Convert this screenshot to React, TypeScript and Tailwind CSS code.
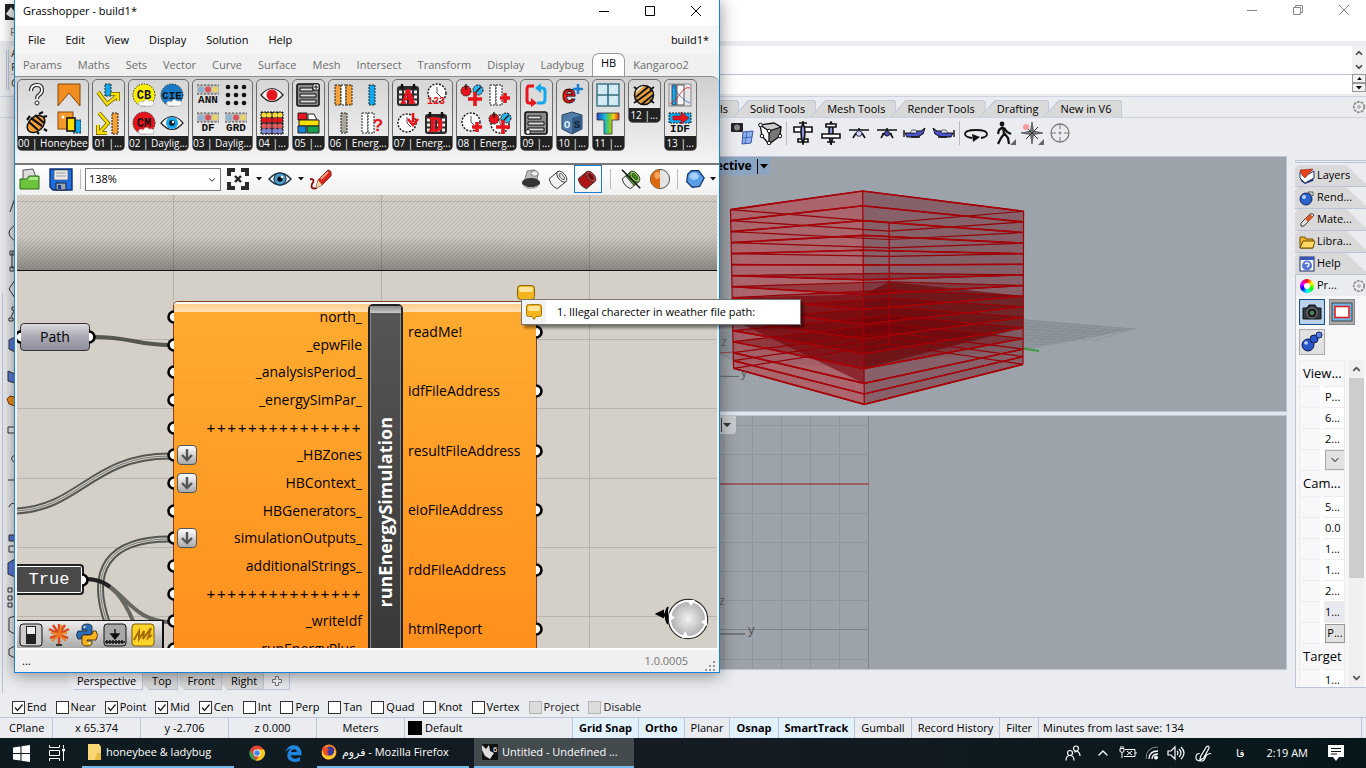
import type { ReactNode } from "react";
import { ChevronDown, ChevronUp } from "lucide-react";

const RED = "#e8141c";
const YEL = "#f7e000";
const ORG = "#f5a13a";
const BLU = "#12a8ee";

const dots3 = (y: number) => (
  <>
    <rect x="1" y={y} width="22" height="9" fill="#bbb" />
    <path d={`M1 ${y}h22M1 ${y + 9}h22`} stroke="#444" strokeDasharray="2 1.5" />
    <circle cx="5" cy={y + 4.5} r="3" fill="#8db4cf" />
    <circle cx="12" cy={y + 4.5} r="3" fill="#d8525a" />
    <circle cx="19" cy={y + 4.5} r="3" fill="#e8d36a" />
  </>
);

const tag = (text: string, x: number, y: number, size: number, fill = "#111") => (
  <text x={x} y={y} fontSize={size} fontWeight="bold" textAnchor="middle" fill={fill} fontFamily="Liberation Mono, monospace">
    {text}
  </text>
);

const sun = (fill: string, text: string) => (
  <>
    <circle cx="12" cy="12" r="11" fill={fill} stroke="#333" strokeDasharray="1.5 1.2" />
    {tag(text, 12, 16, text.length > 2 ? 11 : 12)}
    <path d="M9 23q-4-1-2-4 2-2 4 0 3-5 6-1 5-1 5 3 0 2-3 2z" fill="#fff" stroke="#999" strokeWidth=".6" />
  </>
);

const eye = (iris: string, r: number) => (
  <>
    <path d="M1 12q11-13 22 0-11 13-22 0z" fill="#fff" stroke="#222" strokeWidth="1.2" />
    <circle cx="12" cy="12" r={r} fill={iris} />
  </>
);

const plus = (x: number, y: number, s = 5) => (
  <path d={`M${x - s} ${y}h${s * 2}M${x} ${y - s}v${s * 2}`} stroke={RED} strokeWidth="3.6" />
);

const clock = (x: number, y: number, r: number) => (
  <>
    <circle cx={x} cy={y} r={r} fill="#fff" stroke="#111" strokeWidth="1.4" strokeDasharray="2 1.4" />
    <path d={`M${x} ${y - r + 3}V${y}l4 4`} stroke="#555" fill="none" />
  </>
);

const calendar = (text: string) => (
  <>
    <rect x="1" y="3" width="22" height="20" rx="3" fill="#2a2a2a" />
    <path d="M6 1v5M18 1v5" stroke="#111" strokeWidth="2.5" />
    <path d="M3 9h18M3 14h18M3 19h18" stroke="#eee" strokeWidth="3" strokeDasharray="3 2" />
    <text x="12" y="20" fontSize="18" fontWeight="bold" textAnchor="middle" fill={RED} stroke={RED} strokeWidth="1.4" fontFamily="Liberation Serif, serif">{text}</text>
  </>
);

const bee = (
  <>
    <ellipse cx="12" cy="13" rx="10" ry="7" transform="rotate(-42 12 13)" fill={ORG} stroke="#111" strokeWidth="1.5" />
    <path d="M7 7l11 8M5 11l9 8M11 4l9 8M3 9l3-4M20 18l3 2M13 21l2 2M15 3l4-2M19 6l4-1" stroke="#111" strokeWidth="2.2" />
  </>
);

const wall = (fill: string, x = 8, w = 9) => (
  <rect x={x} y="2" width={w} height="20" fill={fill} stroke="#222" strokeDasharray="2 1" />
);

const redBlueDots = (
  <>
    <circle cx="6" cy="8" r="5" fill={RED} stroke="#111" strokeDasharray="2 1" />
    <circle cx="18" cy="7" r="5" fill="#2bb5ea" stroke="#111" strokeDasharray="2 1" />
    <path d="M6 1v6M15 10l6-6" stroke="#111" strokeWidth="1.3" />
    {plus(15, 16, 7)}
  </>
);

const listBox = (
  <>
    <rect x="1" y="1" width="22" height="22" rx="2" fill="#8a8a8a" stroke="#111" strokeWidth="1.6" />
    <path d="M4 5h13v3H4zM4 11h16v3H4zM4 17h16v3H4z" fill="#ddd" stroke="#111" />
  </>
);

const glyphs: Record<string, ReactNode> = {
  help: (
    <>
      <path d="M7 8q0-6 6-6 5 0 5 5 0 3-3 5-2 1-2 4" fill="none" stroke="#222" strokeWidth="4" />
      <path d="M7 8q0-6 6-6 5 0 5 5 0 3-3 5-2 1-2 4" fill="none" stroke="#fff" strokeWidth="1.8" />
      <circle cx="13" cy="20" r="2" fill="#fff" stroke="#222" />
    </>
  ),
  bee,
  update: <path d="M1 1h22v22L12 10 1 23z" fill="#f28c1e" stroke="#7a4a10" />,
  boxes: (
    <>
      <rect x="1" y="1" width="15" height="17" fill="#f49a2c" stroke="#8a4b0c" />
      <rect x="16" y="9" width="8" height="13" fill={BLU} stroke="#222" strokeDasharray="2 1" />
      <rect x="10" y="7" width="8" height="13" fill={YEL} stroke="#111" strokeWidth="1.6" />
      <circle cx="6" cy="6" r="1.5" fill="#fff" />
    </>
  ),
  split: (
    <>
      <rect x="9" y="1" width="6" height="12" fill={BLU} stroke="#222" strokeDasharray="2 1" />
      <path d="M2 9l9 12 10-8M15 11h7v7" fill="none" stroke="#655c00" strokeWidth="4" />
      <path d="M2 9l9 12 10-8M15 11h7v7" fill="none" stroke={YEL} strokeWidth="2.6" />
    </>
  ),
  bounce: (
    <>
      <rect x="16" y="2" width="6" height="21" fill={ORG} stroke="#222" strokeDasharray="2 1" />
      <path d="M3 2l9 10-8 9M2 14v8h9" fill="none" stroke="#655c00" strokeWidth="4" />
      <path d="M3 2l9 10-8 9M2 14v8h9" fill="none" stroke={YEL} strokeWidth="2.6" />
    </>
  ),
  cb: sun("#fff000", "CB"),
  cm: sun(RED, "CM"),
  cie: sun("#1a79c4", "CIE"),
  eyeBlue: (
    <>
      {eye(BLU, 6)}
      <circle cx="12" cy="12" r="3" fill="#123" />
      <circle cx="13" cy="11" r="1.2" fill="#fff" />
    </>
  ),
  ann: <>{dots3(2)}{tag("ANN", 12, 20, 11)}</>,
  df: <>{dots3(2)}{tag("DF", 12, 20, 11)}</>,
  grd: <>{dots3(2)}{tag("GRD", 12, 20, 11)}</>,
  dots: (
    <g fill="#111">
      {[4, 12, 20].map((y) => [4, 12, 20].map((x) => <circle key={`${x}-${y}`} cx={x} cy={y} r="2.3" />))}
    </g>
  ),
  eyeRed: eye(RED, 5.5),
  grid: (
    <>
      <rect x="1" y="1" width="22" height="22" fill="#333" stroke="#111" strokeDasharray="2 1" />
      {[4, 9, 15, 20].map((y, r) =>
        [4, 9, 15, 20].map((x) => (
          <circle key={`${x}-${y}`} cx={x} cy={y} r="2.6" fill={["#f2dc3c", RED, "#e0585c", "#8087d8"][r]} />
        )),
      )}
    </>
  ),
  list: (
    <>
      {listBox}
      <path d="M17 1h6v6h-6z" fill="#fff" stroke="#111" />
      <path d="M20 2v4M18 4h4" stroke="#111" />
    </>
  ),
  bars: (
    <>
      <path d="M2 2h9v7H2z" fill={RED} stroke="#222" />
      <path d="M12 3h6l3 6h-9z" fill="#fff" stroke="#222" />
      <path d="M3 9h20v6H3z" fill={YEL} stroke="#222" />
      <path d="M2 15h8v7H2z" fill="#1583d8" stroke="#222" />
      <path d="M11 15h12v7H11z" fill="#1aa04a" stroke="#222" />
    </>
  ),
  wallPair: <>{wall(ORG, 3, 6)}{wall("#fff", 9, 5)}{wall(ORG, 14, 6)}</>,
  wallBlue: wall(BLU, 9, 6),
  wallGrey: wall("#aaa59a", 9, 6),
  wallAsk: (
    <>
      {wall("#fff", 2, 6)}{wall("#fff", 8, 6)}
      <text x="18" y="20" fontSize="17" fontWeight="bold" textAnchor="middle" fill={RED} fontFamily="Liberation Sans, sans-serif">?</text>
    </>
  ),
  calA: calendar("A"),
  calD: calendar("D"),
  clock123: <>{clock(13, 10, 9)}{tag("123", 12, 21, 10, RED)}</>,
  clockDown: <>{clock(11, 12, 9)}<path d="M17 2v9M12 8l5 6 5-6" stroke={RED} strokeWidth="2.6" fill="none" /></>,
  dotsPlus: redBlueDots,
  wallPlus: <>{wall("#fff", 2, 6)}{wall("#fff", 8, 6)}{plus(17, 15)}</>,
  clockPlus: <>{clock(11, 11, 9)}{plus(17, 16)}</>,
  dotsClock: <>{clock(12, 13, 9)}{redBlueDots}</>,
  swap: (
    <>
      <path d="M10 3H5q-2 0-2 4v10q0 3 2 3h2" fill="none" stroke={RED} strokeWidth="3" />
      <path d="M7 15l6 5-6 4z" fill={RED} />
      <path d="M13 20h5q3 0 3-4V8q0-3-3-3h-1" fill="none" stroke={BLU} strokeWidth="3" />
      <path d="M17 0v10l-6-5z" fill={BLU} />
    </>
  ),
  listDot: <>{listBox}<circle cx="4" cy="21" r="2.4" fill="#fff" stroke="#111" /></>,
  ePlus: (
    <>
      <text x="9" y="20" fontSize="25" fontWeight="bold" textAnchor="middle" fill={RED} stroke="#111" strokeWidth=".8" fontFamily="Liberation Sans, sans-serif">e</text>
      <path d="M13 6h10M18 1v10" stroke="#1b7fd0" strokeWidth="2.6" />
    </>
  ),
  os: (
    <>
      <path d="M2 4l10-3 10 3v14l-10 5-10-5z" fill="#4f7ca8" stroke="#27445f" />
      <path d="M12 7l10-3v14l-10 5z" fill="#355c82" />
      {tag("O", 7, 17, 11, "#dfeefa")}{tag("S", 17, 17, 11, "#0f2234")}
    </>
  ),
  window: (
    <>
      <rect x="1" y="1" width="22" height="22" fill="#cdeaf6" stroke="#3b6d80" strokeWidth="1.4" />
      <path d="M12 1v22M1 12h22" stroke="#3b6d80" strokeWidth="1.6" />
      <path d="M3 9l6-6M14 9l6-6M3 20l6-6M14 20l6-6" stroke="#fff" />
    </>
  ),
  therm: (
    <>
      <defs>
        <linearGradient id="thermal">
          <stop offset="0" stopColor="#2440d0" />
          <stop offset=".35" stopColor="#16b8d8" />
          <stop offset=".55" stopColor="#6cc838" />
          <stop offset=".75" stopColor="#f6d020" />
          <stop offset="1" stopColor="#e83418" />
        </linearGradient>
      </defs>
      <path d="M1 2h22v7h-7v14H8V9H1z" fill="url(#thermal)" stroke="#333" strokeWidth=".8" />
    </>
  ),
  beeRound: (
    <>
      <circle cx="12" cy="12" r="9.500" fill="#e8a03c" stroke="#111" strokeWidth="1.6" />
      <path d="M4 14L16 4M5 18L20 7M10 21L21 12M2 4l4 3M22 4l-4 3M2 20l4-3M22 20l-4-3" stroke="#111" strokeWidth="1.8" fill="none" />
      <path d="M4 8q3-5 8-5L4 10z" fill="#ddd" />
    </>
  ),
  graph: (
    <>
      <rect x="1" y="1" width="22" height="22" fill="#e6e6e6" stroke="#888" />
      <rect x="4" y="2" width="4" height="20" fill={BLU} stroke="#345" />
      <rect x="9" y="2" width="7" height="20" fill="#fafafa" stroke="#555" />
      <path d="M2 21q8-5 10-10 5-8 10-6" stroke={RED} fill="none" strokeWidth=".8" />
      <path d="M5 3q8 14 17 17" stroke="#36c" fill="none" strokeWidth=".8" />
    </>
  ),
  idf: (
    <>
      <rect x="1" y="2" width="22" height="10" fill={BLU} stroke="#222" strokeDasharray="2 1" />
      <path d="M5 5h8V1l8 6-8 6V9H5z" fill={RED} stroke="#700" strokeWidth=".5" />
      {tag("IDF", 12, 21, 11)}
    </>
  ),
};

function Glyph({ name }: { name: string }) {
  return (
    <svg viewBox="0 0 24 24" className="h-6 w-6" aria-hidden="true">
      {glyphs[name]}
    </svg>
  );
}

const ribbonGroups: { label: string; icons: string[]; size: string }[] = [
  { label: "00 | Honeybee", icons: ["help", "update", "bee", "boxes"], size: "w-[69px] grid-cols-2" },
  { label: "01 |...", icons: ["split", "bounce"], size: "w-[31px] grid-cols-1" },
  { label: "02 | Daylig...", icons: ["cb", "cie", "cm", "eyeBlue"], size: "w-[59px] grid-cols-2" },
  { label: "03 | Daylig...", icons: ["ann", "dots", "df", "grd"], size: "w-[59px] grid-cols-2" },
  { label: "04 |...", icons: ["eyeRed", "grid"], size: "w-[31px] grid-cols-1" },
  { label: "05 |...", icons: ["list", "bars"], size: "w-[31px] grid-cols-1" },
  { label: "06 | Energ...", icons: ["wallPair", "wallBlue", "wallGrey", "wallAsk"], size: "w-[59px] grid-cols-2" },
  { label: "07 | Energ...", icons: ["calA", "clock123", "clockDown", "calD"], size: "w-[59px] grid-cols-2" },
  { label: "08 | Energ...", icons: ["dotsPlus", "wallPlus", "clockPlus", "dotsClock"], size: "w-[59px] grid-cols-2" },
  { label: "09 |...", icons: ["swap", "listDot"], size: "w-[31px] grid-cols-1" },
  { label: "10 |...", icons: ["ePlus", "os"], size: "w-[31px] grid-cols-1" },
  { label: "11 |...", icons: ["window", "therm"], size: "w-[31px] grid-cols-1" },
  { label: "12 |...", icons: ["beeRound"], size: "w-[31px] grid-cols-1" },
  { label: "13 |...", icons: ["graph", "idf"], size: "w-[31px] grid-cols-1" },
];

const ghMenus = ["File", "Edit", "View", "Display", "Solution", "Help"];
const ghTabs = ["Params", "Maths", "Sets", "Vector", "Curve", "Surface", "Mesh", "Intersect", "Transform", "Display", "Ladybug", "HB", "Kangaroo2"];

const inputs = [
  "north_", "_epwFile", "_analysisPeriod_", "_energySimPar_", "+++++++++++++++", "_HBZones", "HBContext_",
  "HBGenerators_", "simulationOutputs_", "additionalStrings_", "+++++++++++++++", "_writeIdf", "runEnergyPlus_",
];
const treeInputs = ["_HBZones", "HBContext_", "simulationOutputs_"];
const outputs = ["readMe!", "idfFileAddress", "resultFileAddress", "eioFileAddress", "rddFileAddress", "htmlReport"];

function Ribbon() {
  return (
    <div className="flex h-[87px] items-start gap-[3px] rounded-tr-lg border-t border-[#8c8c8c] bg-linear-to-b from-[#cfcfcf] to-[#f4f4f4] px-[2px] pt-[2px]">
      {ribbonGroups.map((g) => (
        <section key={g.label} className="shrink-0 rounded-[5px] border border-[#6b6b6b] bg-linear-to-b from-[#d6d6d6] to-[#f0f0f0]">
          <div className={`grid justify-items-center gap-y-1 px-px pt-[3px] pb-px ${g.size}`}>
            {g.icons.map((name) => (
              <button key={name} type="button" aria-label={name} className="h-6 w-6">
                <Glyph name={name} />
              </button>
            ))}
          </div>
          <h3 className="flex h-[14px] w-full justify-center rounded-b-[3px] bg-[#222] text-[10px] leading-[14px] whitespace-nowrap text-white">{g.label}</h3>
        </section>
      ))}
    </div>
  );
}

const can = (body: string, lid: string, hole: string) => (
  <svg viewBox="0 0 24 24" className="h-[22px] w-[22px]" aria-hidden="true">
    <g transform="rotate(-40 12 12)" stroke="#333">
      <path d="M4 5h12v14H4q-4-7 0-14z" fill={body} />
      <ellipse cx="16" cy="12" rx="4" ry="7" fill={lid} />
      <ellipse cx="16" cy="12" rx="2" ry="4" fill={hole} strokeWidth=".8" />
    </g>
  </svg>
);

const Caret = () => (
  <svg viewBox="0 0 6 4" className="h-1 w-[6px]" aria-hidden="true"><path d="M0 0h6L3 3.5z" fill="#111" /></svg>
);

function CanvasToolbar() {
  return (
    <div className="flex h-8 items-center border-t-2 border-[#777] bg-linear-to-b from-white to-[#f0f0f0] pr-[3px] pb-[2px] pl-1">
      <button type="button" aria-label="Open" className="mr-2 h-6 w-[22px]">
        <svg viewBox="0 0 22 24"><path d="M4 3l10-1 3 8v6H4z" fill="#ddd" stroke="#555" /><path d="M1 22V12h7l2-3h10v13z" fill="#6cc33c" stroke="#2b6b12" /><path d="M2 13h7l2-3h8v3z" fill="#a9e58a" /></svg>
      </button>
      <button type="button" aria-label="Save" className="mr-[7px] h-6 w-6">
        <svg viewBox="0 0 24 24"><path d="M1 2h22v21H4l-3-3z" fill="#1e6fe0" stroke="#0b2e78" strokeWidth="1.4" /><path d="M5 3h14v10H5z" fill="#e8e8e8" stroke="#345" strokeWidth=".6" /><path d="M7 6h10M7 9h10" stroke="#999" /><path d="M7 16h10v7H7z" fill="#9aa3b0" stroke="#123" /><path d="M9 18h3v4H9z" fill="#123a8c" /></svg>
      </button>
      <span className="h-5 w-px bg-[#bbb]" />
      <label className="relative ml-1 block h-[23px]">
        <select aria-label="Zoom" className="block h-[23px] w-[136px] appearance-none border border-[#7a7a7a] bg-white px-[3px] text-[11px]" defaultValue="138%">
          <option>138%</option>
        </select>
        <ChevronDown className="pointer-events-none absolute top-[7px] right-1 h-[10px] w-[10px]" strokeWidth={2} />
      </label>
      <button type="button" aria-label="Zoom extents" className="ml-[5px] flex items-center gap-[6px]">
        <svg viewBox="0 0 24 24" className="h-6 w-6"><path d="M3 9V3h6M15 3h6v6M21 15v6h-6M9 21H3v-6" fill="none" stroke="#2b2b2b" strokeWidth="4" /><path d="M9 9l6 6M15 9l-6 6" stroke="#222" strokeWidth="2.4" /></svg>
        <Caret />
      </button>
      <button type="button" aria-label="Preview eye" className="ml-[6px] flex items-center gap-[6px]">
        <svg viewBox="0 0 24 24" className="h-6 w-6"><path d="M1 12q11-12 22 0-11 12-22 0z" fill="#e8eef2" stroke="#234" strokeWidth="1.5" /><circle cx="12" cy="12" r="6" fill="#4a9fc6" stroke="#124" /><circle cx="12" cy="12" r="2.6" fill="#001" /><circle cx="14" cy="10" r="1.3" fill="#fff" /></svg>
        <Caret />
      </button>
      <button type="button" aria-label="Sketch" className="ml-[5px]">
        <svg viewBox="0 0 24 24" className="h-6 w-6"><path d="M1 12q6 0 2 5-2 6 5 4" fill="none" stroke="#8c1010" strokeWidth="1.8" /><path d="M7 21l2-8L19 3q4 0 3 6l-9 9z" fill="#d8281c" stroke="#641008" strokeWidth=".8" /><path d="M7 21l2-8 4 5z" fill="#f3d6a4" /><path d="M12 12l7-7" stroke="#ff9c84" strokeWidth="2" /></svg>
      </button>
      <div className="ml-auto flex items-center">
        <button type="button" aria-label="No preview" className="mr-1 px-[2px]">
          <svg viewBox="0 0 24 24" className="h-[22px] w-[22px]"><path d="M5 13L8 3l8-1 4 4-2 9z" fill="#bbb" stroke="#777" /><ellipse cx="16" cy="6" rx="4" ry="3" fill="#eee" stroke="#777" /><ellipse cx="12" cy="16" rx="10" ry="5" fill="#333" /><path d="M3 18q9 6 18 0-2 5-9 5t-9-5z" fill="#aaa" /></svg>
        </button>
        <button type="button" aria-label="Wireframe preview" className="mr-1">{can("#f4f4f4", "#fff", "#ddd")}</button>
        <button type="button" aria-label="Shaded preview" aria-pressed="true" className="flex h-7 w-7 items-center justify-center border border-[#1c7fd6]">{can("#b01414", "#d83030", "#7a0808")}</button>
        <span className="mx-2 h-5 w-px bg-[#bbb]" />
        <button type="button" aria-label="Selected only" className="mr-1 px-[2px]">
          <svg viewBox="0 0 24 24" className="h-[22px] w-[22px]"><g transform="rotate(-40 12 12)" stroke="#333"><path d="M4 5h6v14H4q-4-7 0-14z" fill="#eee" /><path d="M9 5h7v14H9z" fill="#5cae28" /><ellipse cx="16" cy="12" rx="4" ry="7" fill="#8ed454" /><ellipse cx="16" cy="12" rx="2" ry="4" fill="#3f8a16" strokeWidth=".8" /></g><path d="M1 2l20 20" stroke="#111" strokeWidth="1.6" /></svg>
        </button>
        <button type="button" aria-label="Material">
          <svg viewBox="0 0 24 24" className="h-[22px] w-[22px]"><circle cx="12" cy="12" r="10.5" fill="#e4e4e4" stroke="#444" /><path d="M12 1.500a10.500 10.500 0 0 0 0 21z" fill="#dd6a14" /><ellipse cx="9" cy="8" rx="3" ry="4" fill="#ffc07a" opacity=".7" /></svg>
        </button>
        <span className="mx-[6px] h-5 w-px bg-[#bbb]" />
        <button type="button" aria-label="Mesh quality" className="flex items-center gap-1">
          <svg viewBox="0 0 24 24" className="h-[22px] w-[22px]"><path d="M8 3h8l6 8-5 9-8 1-6-6 1-8z" fill="#5b9ee6" stroke="#123a70" strokeWidth="1.4" /><ellipse cx="11" cy="9" rx="5" ry="4" fill="#b4dcff" opacity=".8" /></svg>
          <Caret />
        </button>
      </div>
    </div>
  );
}

const Grip = ({ side }: { side: "left" | "right" }) => (
  <svg viewBox="0 0 7 14" className={`absolute top-1/2 h-[14px] w-[7px] -translate-y-1/2 ${side === "left" ? "right-full" : "left-full"}`} aria-hidden="true">
    <path d={side === "left" ? "M7 1.500a5.500 5.500 0 0 0 0 11" : "M0 1.500a5.500 5.500 0 0 1 0 11"} fill="#fff" stroke="#000" strokeWidth="2.600" />
  </svg>
);

function Component() {
  return (
    <div className="absolute top-[106px] left-[156px] flex h-[420px] w-[364px] rounded-[5px] border border-[#8a3c1c] bg-linear-to-b from-[#ffab30] to-[#ff8a18]">
      <div className="absolute inset-x-0 top-0 h-[10px] rounded-t border-t-2 border-white/90 bg-linear-to-b from-[#ffcf8e] to-[#ffe0b4]" />
      <ul className="relative flex h-[361px] w-[194px] flex-col pt-px">
        {inputs.map((name, i) => (
          <li key={i} className="relative flex flex-1 items-center justify-end pr-[6px] text-[14px] leading-5">
            <Grip side="left" />
            {treeInputs.includes(name) && (
              <button type="button" aria-label={`Flatten ${name}`} className="absolute left-[3px] flex h-5 w-5 items-center justify-center rounded-[4px] border border-[#555] bg-linear-to-b from-white to-[#aaa]">
                <svg viewBox="0 0 14 14" className="h-[14px] w-[14px]"><path d="M7 1v11M2 7l5 5 5-5" fill="none" stroke="#555" strokeWidth="2.400" /></svg>
              </button>
            )}
            {name[0] === "+" ? <span className="font-['Liberation_Sans',sans-serif] text-[15px] tracking-[1.6px]">{name}</span> : name}
          </li>
        ))}
      </ul>
      <div className="relative mt-[2px] flex w-[35px] items-center justify-center rounded-t-[5px] border-2 border-[#222] bg-linear-to-b from-[#565656] to-[#333] shadow-[inset_1px_0_0_#888,inset_-1px_0_0_#888]">
        <div className="absolute inset-x-0 top-0 h-[7px] bg-linear-to-b from-[#888] to-[#ccc]" />
        <span className="rotate-180 text-[18px] font-bold text-white [writing-mode:vertical-rl]">runEnergySimulation</span>
      </div>
      <ul className="relative flex h-[357px] flex-1 flex-col">
        {outputs.map((name) => (
          <li key={name} className="relative flex flex-1 items-center pl-[5px] text-[14px] leading-5">
            {name}
            <Grip side="right" />
          </li>
        ))}
      </ul>
    </div>
  );
}

const shelf: [string, ReactNode][] = [
  ["Toggle", <><rect x="1" y="1" width="22" height="22" rx="3" fill="#ccc" stroke="#111" /><rect x="7" y="3" width="10" height="18" fill="#222" /><rect x="8" y="4" width="8" height="7" fill="#eee" /></>],
  ["Tree", <><path d="M12 22V10M12 11L2 6M12 11L6 2M12 11V1M12 11l6-9M12 11l10-5M12 12l-9 3M12 12l9 3" stroke="#d8491c" strokeWidth="2.4" /><path d="M12 11L4 10M12 11l8-1M12 10l3-8M12 12l-7 6M12 12l7 6" stroke="#f0801e" strokeWidth="2" /><path d="M9 22h6" stroke="#333" strokeWidth="2" /></>],
  ["Python", <><path d="M7 4q0-3 5-3t5 3v6q0 2-2 2H9q-3 0-3 4H3q-3-4 0-8h9V7H7z" fill="#2e6cb4" stroke="#123" strokeWidth=".8" /><path d="M17 20q0 3-5 3t-5-3v-6q0-2 2-2h6q3 0 3-4h3q3 4 0 9h-9v1h5z" fill="#f7b21c" stroke="#321" strokeWidth=".8" /><circle cx="9.500" cy="4" r="1" fill="#fff" /><circle cx="14.500" cy="20" r="1" fill="#fff" /></>],
  ["Slider", <><rect x="1" y="1" width="22" height="22" rx="3" fill="#a8a8a8" stroke="#111" /><path d="M12 6v9M8 11l4 5 4-5zM2 19h20M4 17v4M7 17v4M10 17v4M13 17v4M16 17v4M19 17v4" stroke="#111" strokeWidth="1.400" /></>],
  ["Scribble", <><rect x="1" y="1" width="22" height="22" rx="3" fill="#ffd42a" stroke="#7a5a00" /><path d="M3 17l5-9v8l5-8-1 8 8-11-3 10 4-3" fill="none" stroke="#a66c00" strokeWidth="2" /></>],
];

function GrasshopperCanvas() {
  return (
    <div className="relative mx-[2px] flex-1 overflow-hidden bg-[#d4d0c8]">
      <svg className="absolute inset-0 h-full w-full" aria-hidden="true">
        <defs>
          <pattern id="hatch" width="4" height="4" patternUnits="userSpaceOnUse">
            <path d="M-1 1l2-2M0 4l4-4M3 5l2-2" stroke="#000" strokeOpacity=".09" />
          </pattern>
          <linearGradient id="fade" x2="0" y2="1">
            <stop offset="0" stopColor="#000" stopOpacity="0" />
            <stop offset=".55" stopColor="#000" stopOpacity=".04" />
            <stop offset="1" stopColor="#000" stopOpacity=".34" />
          </linearGradient>
          <radialGradient id="knob"><stop offset="0" stopColor="#f2f2f2" /><stop offset="1" stopColor="#aaa" /></radialGradient>
        </defs>
        <rect width="100%" height="75" fill="url(#hatch)" />
        <rect width="100%" height="75" fill="url(#fade)" />
        <g transform="translate(-17 -195)">
          <path d="M173.500 195v460M381.500 195v460M589.500 195v460M17 201.500h702M17 339.500h702M17 408.500h702M17 478.500h702M17 547.500h702M17 616.500h702" stroke="#000" strokeOpacity=".13" />
          <path d="M17 270.500h702" stroke="#111" />
          <g fill="none" stroke="#555650">
            <path d="M94 337c35 0 45 8 75 8" strokeWidth="4" />
            <path d="M16 511C80 508 92 456 170 456" strokeWidth="7" />
            <path d="M16 511C80 508 92 456 170 456" strokeWidth="3" stroke="#d4d0c8" />
            <path d="M16 511C80 508 92 456 170 456" strokeWidth="1" stroke="#777" />
            <path d="M108 625C88 570 108 539 170 539" strokeWidth="7" />
            <path d="M108 625C88 570 108 539 170 539" strokeWidth="3" stroke="#d4d0c8" />
            <path d="M108 625C88 570 108 539 170 539" strokeWidth="1" stroke="#777" />
            <path d="M88 579c36 2 38 43 84 43M88 579c24 2 36 20 46 44" strokeWidth="4" strokeOpacity=".85" />
            <path d="M88 579q14 1 22 8" stroke="#222" strokeWidth="4" />
          </g>
          <path d="M657 614l6-3v6zM668 607q-5 8 0 17" fill="#000" stroke="#000" strokeWidth="2" />
          <path d="M662 614l6 2" stroke="#000" strokeWidth="3" />
          <circle cx="688" cy="619" r="19.500" fill="url(#knob)" stroke="#333" strokeWidth="1.500" />
          <circle cx="688" cy="619" r="18" fill="none" stroke="#fff" strokeWidth="2" />
          <path d="M687 600h8l-4 6zM682 638l3-7 4 7zM707 618v8l-6-4zM669 613v8l6-3z" fill="#fff" />
        </g>
      </svg>
      <div className="absolute top-[128px] left-[3px] flex h-[28px] w-[70px] items-center justify-center rounded-[4px] border border-[#333] bg-linear-to-b from-[#dcdce0] via-[#a9a8b3] to-[#8f8e9c] text-[14px] leading-5">
        Path
        <Grip side="left" />
        <Grip side="right" />
      </div>
      <div className="absolute top-[369px] -left-[3px] flex h-[31px] w-[70px] items-center justify-center rounded-[4px] border-2 border-[#222] bg-[#4a4a4a] font-['Liberation_Mono',monospace] text-[17px] leading-5 text-white ring-1 ring-white ring-inset">
        True
        <Grip side="right" />
      </div>
      <Component />
      <svg viewBox="0 0 18 15" className="absolute top-[90px] left-[500px] h-[15px] w-[18px]" aria-hidden="true">
        <rect x=".5" y=".5" width="17" height="14" rx="3" fill="#f3b51c" stroke="#86640c" />
        <rect x="2" y="2" width="14" height="5" rx="2" fill="#ffe49a" />
      </svg>
      <div className="absolute bottom-0 left-0 flex h-7 w-[147px] items-center gap-1 border-t border-r-2 border-[#111] bg-linear-to-b from-[#eee] to-[#aaa] pl-[2px]">
        {shelf.map(([name, art]) => (
          <button key={name} type="button" aria-label={name} className="h-6 w-6">
            <svg viewBox="0 0 24 24">{art}</svg>
          </button>
        ))}
      </div>
    </div>
  );
}

function Grasshopper() {
  return (
    <div className="absolute top-0 left-[14px] flex h-[673px] w-[706px] flex-col border border-t-0 border-[#1883d7] bg-[#f0f0f0] shadow-[0_2px_16px_rgba(0,0,0,0.45)]">
      <header className="flex h-[26px] items-center bg-white pr-[17px] pb-1 pl-2 text-[11px]">
        <span>Grasshopper - build1*</span>
        <div className="ml-auto flex items-center gap-[34px]">
          <button type="button" aria-label="Minimize"><svg viewBox="0 0 12 12" className="h-3 w-3"><path d="M1 6.500h10" stroke="#000" /></svg></button>
          <button type="button" aria-label="Maximize"><svg viewBox="0 0 12 12" className="h-3 w-3"><path d="M1.500 1.500h9v9h-9z" fill="none" stroke="#000" /></svg></button>
          <button type="button" aria-label="Close"><svg viewBox="0 0 12 12" className="h-3 w-3"><path d="M1 1l10 10M11 1L1 11" stroke="#000" /></svg></button>
        </div>
      </header>
      <nav className="flex h-[27px] items-center gap-5 bg-[#f5f5f5] pt-px pr-[10px] pl-[13px] text-[11px]">
        {ghMenus.map((m) => <button key={m} type="button">{m}</button>)}
        <span className="ml-auto">build1*</span>
      </nav>
      <div className="flex h-[23px] items-center gap-4 pl-2 text-[11px] text-[#6d6d6d]" role="tablist">
        {ghTabs.map((t) =>
          t === "HB" ? (
            <button key={t} type="button" role="tab" aria-selected="true" className="-mx-2 h-[23px] self-end rounded-t-[7px] border border-b-0 border-[#9a9a9a] bg-white px-2 pb-1 text-black">{t}</button>
          ) : (
            <button key={t} type="button" role="tab" aria-selected="false" className="pt-px">{t}</button>
          ),
        )}
      </div>
      <Ribbon />
      <CanvasToolbar />
      <GrasshopperCanvas />
      <footer className="flex h-6 items-center border-t-2 border-white px-[7px] text-[11px]">
        <span>...</span>
        <span className="mr-4 ml-auto text-[#777]">1.0.0005</span>
        <svg viewBox="0 0 12 12" className="-mr-1 h-3 w-3 self-end" aria-hidden="true"><path d="M9 1h2v2H9zM5 5h2v2H5zM9 5h2v2H9zM1 9h2v2H1zM5 9h2v2H5zM9 9h2v2H9z" fill="#999" /></svg>
      </footer>
    </div>
  );
}

function Tooltip() {
  return (
    <div role="tooltip" className="absolute top-[299px] left-[521px] flex h-[26px] w-[280px] items-center border border-[#767676] bg-white text-[11px] shadow-[3px_3px_3px_rgba(0,0,0,0.45)]">
      <span className="flex h-full w-6 items-center justify-center bg-[#f2f2f2]">
        <svg viewBox="0 0 16 16" className="h-4 w-4"><path d="M2.500.5h11q2 0 2 2v8q0 2-2 2H10l-2 3-2-3H2.500q-2 0-2-2v-8q0-2 2-2z" fill="#f3b51c" stroke="#a67a10" /><rect x="2" y="2" width="12" height="5" rx="2" fill="#ffe49a" /></svg>
      </span>
      <span className="pl-[11px]">1. Illegal charecter in weather file path:</span>
    </div>
  );
}

// storey heights along each vertical edge: left, front, right, back
const storeys = Array.from({ length: 16 }, (_, k) => {
  const at = (top: number, step: number, tail: [number, number]) => (k < 14 ? top + step * k : tail[k - 14]);
  const t = k / 15;
  return {
    l: [730.5 + 3 * t, at(209.6, 11, [360.6, 368.3])],
    f: [862.7 + 1.6 * t, at(191, 14.8, [394, 404.3])],
    r: [1023.6 - 0.6 * t, at(211.3, 10.6, [356.6, 364.3])],
    b: [889 + 0.6 * t, at(222.6, 8.45, [338, 344])],
  };
});

const pts = (list: number[][]) => list.map((p) => p.join(",")).join(" ");

function PerspectiveScene() {
  const top = storeys[0];
  const base = storeys[15];
  return (
    <svg className="absolute inset-0 h-full w-full" aria-hidden="true">
      <g transform="translate(-679 -157)">
        <path d="M680 337l150-20 193 2 113 10-110 20-180 18-110-5z" fill="#8b9199" fillOpacity=".8" />
        {Array.from({ length: 11 }, (_, i) => (
          <path key={i} d={`M1023 ${320 + i * 3}L${1136 - i * 10} ${329 + i * 2}M${1023 + i * 11} ${319 + i}l-40 ${22 - i}`} stroke="#7c838b" strokeOpacity=".6" strokeWidth=".6" />
        ))}
        <path d="M1023 348.500l16 2.500" stroke="#3c9a3c" strokeWidth="2" />
        <path d="M690 355l44-3" stroke="#a04545" />
        <path d="M700 376l39 .5" stroke="#666" />
        <polygon points={pts([top.l, top.f, base.f, base.l])} fill="#b82830" fillOpacity=".5" />
        <polygon points={pts([top.f, top.r, base.r, base.f])} fill="#702028" fillOpacity=".5" />
        {/* stacked slabs read as a darker core */}
        <polygon points={pts([storeys[8].l, storeys[7].f, storeys[13].f, storeys[10].l])} fill="#780006" fillOpacity=".6" />
        <polygon points={pts([storeys[7].f, storeys[7].b, storeys[8].r, storeys[11].r, storeys[12].f])} fill="#600000" fillOpacity=".6" />
        {storeys.map((s, k) => (
          <polygon key={k} points={pts([s.l, s.f, s.r, s.b])} fill="#740002" fillOpacity={k > 5 && k < 13 ? 0.4 : 0} stroke="#940006" strokeWidth="1.200" />
        ))}
        {storeys.map((s, k) => (
          <polyline key={k} points={pts([s.l, s.f, s.r])} fill="none" stroke="#a80008" strokeWidth="1.600" />
        ))}
        <path d={`M${top.l}L${base.l}M${top.f}L${base.f}M${top.r}L${base.r}M${top.b}L${base.b}`} stroke="#a00008" strokeWidth="1.200" fill="none" />
        <text x="721" y="346" fontSize="12" fill="#666" fontFamily="Open Sans, sans-serif">z</text>
        <text x="741" y="377" fontSize="12" fill="#555" fontFamily="Open Sans, sans-serif">y</text>
      </g>
    </svg>
  );
}

function RightScene() {
  return (
    <svg className="absolute inset-0 h-full w-full" aria-hidden="true">
      <g transform="translate(-679 -416)">
        <path d="M723.500 416v255M752.500 416v255M781.500 416v255M810.500 416v255M839.500 416v255M678 425.500h191M678 454.500h191M678 513.500h191M678 542.500h191M678 571.500h191M678 600.500h191M678 659.500h191" stroke="#8f969e" />
        <path d="M868.500 416v255M678 629.500h191" stroke="#7d848c" />
        <path d="M678 484h191" stroke="#9c4548" strokeWidth="1.600" />
        <path d="M700 634h45" stroke="#73777c" strokeWidth="2" />
        <text x="719" y="605" fontSize="13" fill="#666" fontFamily="Open Sans, sans-serif">z</text>
        <text x="748" y="634" fontSize="13" fill="#555" fontFamily="Open Sans, sans-serif">y</text>
      </g>
    </svg>
  );
}

const toolTabs = ["ls", "Solid Tools", "Mesh Tools", "Render Tools", "Drafting", "New in V6"];

const viewTools: [string, ReactNode][] = [
  ["Camera", <><rect x="1" y="2" width="12" height="9" rx="1" fill="#222" /><circle cx="7" cy="6.500" r="3" fill="#888" /><path d="M13 11l10-1-2 12-9 1z" fill="#8fb0ee" stroke="#345aa8" /><path d="M17 11l-2 12M12 17l10-1" stroke="#345aa8" strokeWidth=".8" /></>],
  ["Box", <><path d="M2 4l14-2 7 4-12 4z" fill="#ccc" /><path d="M2 4l9 6v13L4 15z" fill="#fff" /><path d="M11 10l12-4-1 9-11 8z" fill="#777" /><path d="M2 4l14-2 7 4-12 4zM2 4l2 11 7 8 11-8 1-9M11 10v13" fill="none" stroke="#111" strokeWidth="1.300" /><g fill="#fff" stroke="#111"><circle cx="2.500" cy="4" r="1.800" /><circle cx="11" cy="10" r="1.800" /><circle cx="4" cy="15" r="1.800" /><circle cx="11" cy="22" r="1.800" /><circle cx="22" cy="15" r="1.800" /></g></>],
  ["|", null],
  ["Top view", <g stroke="#111" strokeWidth="1.600"><path d="M8 2h8M12 0v3M3 6h18v5H3zM7 18h10v3H7z" fill="#fff" /><path d="M12 3q2 3 2 8t-2 12q-2-6-2-12t2-8z" fill="#8f94e0" /></g>],
  ["Bottom view", <g stroke="#111" strokeWidth="1.600"><path d="M12 1q2 3 2 10t-2 12q-2-5-2-12t2-10z" fill="#8f94e0" /><path d="M7 3h10v3H7zM3 13h18v4H3zM8 21h8M12 21v3" fill="#fff" /></g>],
  ["Front view", <><path d="M2 9h20M12 7v3M9 12l-3 5M15 12l3 5" stroke="#111" strokeWidth="1.600" /><circle cx="12" cy="12.500" r="2.800" fill="#cfd1f5" stroke="#334" /></>],
  ["Back view", <><path d="M2 9h20M12 7v3M9 12l-3 5M15 12l3 5M7 13h10" stroke="#111" strokeWidth="1.600" /><circle cx="12" cy="12.500" r="2.600" fill="#4448b0" stroke="#223" /></>],
  ["Left view", <><path d="M2 12h9l3-2h4l4-3-2 6-6 3H4z" fill="#4d55cc" stroke="#111" /><path d="M1 9v7M8 16h9" stroke="#111" strokeWidth="1.400" /><path d="M7 12l2-3h4l1 3z" fill="#dfe4ff" stroke="#111" strokeWidth=".6" /></>],
  ["Right view", <><path d="M22 12h-9l-3-2H6L2 7l2 6 6 3h10z" fill="#4d55cc" stroke="#111" /><path d="M23 9v7M16 16H7" stroke="#111" strokeWidth="1.400" /><path d="M17 12l-2-3h-4l-1 3z" fill="#dfe4ff" stroke="#111" strokeWidth=".6" /></>],
  ["|", null],
  ["Rotate view", <><path d="M8 17q-7-1-7-4 0-4 11-4t11 4q0 3-6 4" fill="none" stroke="#111" strokeWidth="1.800" /><path d="M8 13l8 3-7 5z" fill="#111" /></>],
  ["Walk", <><circle cx="10" cy="3" r="2.400" fill="#111" /><path d="M11 6l-4 3-1 4M11 6l1 7-3 4-3 6M12 12l4 5 1 6M12 7l3 4 4 2" stroke="#111" strokeWidth="2.200" fill="none" /><path d="M24 18v6h-6z" fill="#666" /></>],
  ["Set view", <><path d="M12 1l1.500 9L23 12l-9.500 1.500L12 23l-1.500-9.500L1 12l9.500-2z" fill="#777" stroke="#333" strokeWidth=".6" /><path d="M6 6l12 12M18 6L6 18" stroke="#333" /><circle cx="6" cy="6" r="3" fill="#f59a9a" /><path d="M24 18v6h-6z" fill="#666" /></>],
  ["Target", <><circle cx="12" cy="12" r="9" fill="none" stroke="#777" strokeWidth="1.300" /><path d="M12 3v5M12 16v5M3 12h5M16 12h5M10.500 12h3M12 10.500v3" stroke="#777" /></>],
];

const Gear = ({ className }: { className: string }) => (
  <svg viewBox="0 0 16 16" className={className} aria-hidden="true">
    <circle cx="8" cy="8" r="6" fill="none" stroke="#8b8b8b" strokeWidth="2" strokeDasharray="3 1.200" />
    <circle cx="8" cy="8" r="1.500" fill="none" stroke="#8b8b8b" />
  </svg>
);

const panelTabs: [string, ReactNode][] = [
  ["Layers", <><path d="M1 4l9 2 5-3v7l-9 5-5-5z" fill="#fff" stroke="#223a78" /><path d="M1 10l5 5 9-5-1 3-8 3-4-3z" fill="#223a78" /><path d="M1 2l13-1-8 9q-4-3-5-8z" fill="#e8421c" stroke="#822" strokeWidth=".6" /></>],
  ["Rend...", <><circle cx="7" cy="9" r="6" fill="#2a62c8" stroke="#112a66" /><circle cx="5" cy="7" r="2" fill="#b8d4ff" /><path d="M9 2h5v4l-3-2z" fill="#ddd" stroke="#333" strokeWidth=".7" /></>],
  ["Mate...", <><path d="M2 14q-1-3 2-5l7-7q3-1 4 1L6 13q-2 2-4 1z" fill="#e6e6e6" stroke="#333" /><path d="M6 7l5-5 3 3-5 5z" fill="#d85a2c" /></>],
  ["Libra...", <><path d="M1 3h5l1 2h7v9H1z" fill="#f0b428" stroke="#6e4c06" /><path d="M1 14l3-7h12l-2 7z" fill="#ffd860" stroke="#6e4c06" /></>],
  ["Help", <><rect x="1" y="1" width="14" height="14" fill="#fff" stroke="#112a66" /><path d="M1 1h14v3H1z" fill="#3656b8" /><circle cx="8" cy="9.500" r="5" fill="#5674dc" /><path d="M6 8q2-2 4 0 0 2-2 3" stroke="#fff" fill="none" strokeWidth="1.500" /></>],
];

const viewRows = ["P...", "6...", "2..."];
const cameraRows = ["5...", "0.0", "1...", "1...", "2..."];

function PropRow({ children, tone = "bg-white" }: { children: ReactNode; tone?: string }) {
  return (
    <tr className="h-[21px] border-b border-[#ececf0]">
      <td className="w-[18px] bg-[#f7f7fa]" />
      <td className={`border-l-4 border-white pl-px text-[11px] ${tone}`}>{children}</td>
    </tr>
  );
}

const PropHead = ({ children }: { children: ReactNode }) => (
  <tr className="h-[26px] border-b border-[#ececf0]">
    <th colSpan={2} scope="colgroup" className="bg-[#f7f7fa] pl-[3px] text-left text-[13px] font-normal">{children}</th>
  </tr>
);

function SidePanel() {
  return (
    <aside className="mt-1 mb-[9px] ml-2 flex min-h-0 w-[71px] shrink-0 flex-col border-t border-[#bcc4da]">
      <div className="mb-[2px] h-[2px] shrink-0 border-b border-[#bcc4da]" />
      {panelTabs.map(([name, art]) => (
        <button key={name} type="button" className="flex h-[22px] shrink-0 items-center gap-[2px] border-b border-[#bcc4da] bg-[#d9d9d9] pl-1 text-[11px] [clip-path:polygon(0_3px,3px_0,72%_0,100%_85%,100%_100%,0_100%)]">
          <svg viewBox="0 0 16 16" className="h-4 w-4 shrink-0">{art}</svg>
          {name}
        </button>
      ))}
      <div className="flex h-[21px] shrink-0 items-center gap-[3px] border-l border-[#bcc4da] pl-1 text-[11px]">
        <span className="h-[14px] w-[14px] shrink-0 rounded-full bg-[conic-gradient(#f00,#ff0,#0f0,#0ff,#00f,#f0f,#f00)] p-1"><span className="block h-full w-full rounded-full bg-white" /></span>
        Pr...
        <span className="ml-auto"><Gear className="h-[14px] w-[14px]" /></span>
      </div>
      <div className="flex min-h-0 flex-1 flex-col border-b border-l border-[#bcc4da] bg-[#f7f7fa]">
        <div className="flex flex-wrap gap-1 pt-[3px] pb-[5px] pl-[3px]">
          <button type="button" aria-label="View properties" aria-pressed="true" className="flex h-[26px] w-[26px] items-center justify-center border border-[#15508c] bg-[#b9d1ea]">
            <svg viewBox="0 0 20 16" className="h-4 w-5"><path d="M1 4h4l2-3h6l2 3h4v11H1z" fill="#333b42" stroke="#111" /><circle cx="10" cy="9" r="5" fill="#111" stroke="#888" /><circle cx="10" cy="9" r="2.400" fill="#4a7a5c" /></svg>
          </button>
          <button type="button" aria-label="Viewport frame" className="flex h-[26px] w-[26px] items-center justify-center border border-[#888] bg-[#aaa]">
            <svg viewBox="0 0 22 22" className="h-[22px] w-[22px]"><rect x="1" y="2" width="20" height="18" fill="#6cb8e8" stroke="#444" /><rect x="4" y="5.500" width="14" height="11" fill="#fff" stroke="#e02020" strokeWidth="1.600" /></svg>
          </button>
          <button type="button" aria-label="Link" className="flex h-[26px] w-[26px] items-center justify-center border border-[#aaa] bg-[#e1e1e1]">
            <svg viewBox="0 0 22 22" className="h-[22px] w-[22px]" stroke="#0a1a55"><circle cx="7" cy="14" r="6" fill="#2a56c8" /><circle cx="13" cy="8" r="4" fill="#2a56c8" /><circle cx="18" cy="4" r="3" fill="#5a86e8" /><circle cx="5" cy="12" r="1.800" fill="#c4d8ff" stroke="none" /></svg>
          </button>
        </div>
        <div className="flex min-h-0 flex-1 pl-[3px]">
          <div className="min-h-0 flex-1 overflow-hidden">
            <table className="w-[46px] table-fixed border-collapse border border-[#ececf0]">
              <tbody>
                <PropHead>View...</PropHead>
                {viewRows.map((v, i) => <PropRow key={i}>{v}</PropRow>)}
                <PropRow><button type="button" aria-label="Choose" className="flex h-5 w-5 items-center justify-center border border-[#aaa] bg-[#e1e1e1]"><ChevronDown className="h-3 w-3" /></button></PropRow>
                <PropHead>Cam...</PropHead>
                {cameraRows.map((v, i) => <PropRow key={i}>{v}</PropRow>)}
                <PropRow tone="bg-[#e9eaf0]">1...</PropRow>
                <PropRow><button type="button" className="h-[19px] w-5 border border-[#999] bg-[#e1e1e1]">P...</button></PropRow>
                <PropHead>Target</PropHead>
                <PropRow>1...</PropRow>
              </tbody>
            </table>
          </div>
          <div className="mr-[2px] flex w-[15px] flex-col items-center justify-between bg-[#f0f0f0] text-[#555]">
            <ChevronUp className="my-[2px] h-[14px] w-[11px]" strokeWidth={4} />
            <span className="mb-auto h-[200px] w-full bg-[#cdcdcd]" />
            <ChevronDown className="my-[2px] h-[14px] w-[11px]" strokeWidth={4} />
          </div>
        </div>
      </div>
    </aside>
  );
}

const osnaps: [string, boolean, boolean][] = [
  ["End", true, false], ["Near", false, false], ["Point", true, false], ["Mid", true, false], ["Cen", true, false],
  ["Int", false, false], ["Perp", false, false], ["Tan", false, false], ["Quad", false, false], ["Knot", false, false],
  ["Vertex", false, false], ["Project", false, true], ["Disable", false, true],
];

const modes: [string, boolean][] = [
  ["Grid Snap", true], ["Ortho", true], ["Planar", false], ["Osnap", true], ["SmartTrack", true],
  ["Gumball", false], ["Record History", false], ["Filter", false],
];

function StatusBars() {
  return (
    <>
      <div className="flex h-[20px] shrink-0 items-center gap-2 pl-3 text-[11px]">
        {osnaps.map(([name, on, off]) => (
          <label key={name} className={`relative flex items-center gap-[2px] ${off ? "text-[#222]" : ""}`}>
            <input type="checkbox" defaultChecked={on} disabled={off} className="peer h-[13px] w-[13px] appearance-none border border-[#333] bg-white disabled:border-[#b4b4b4] disabled:bg-[#dcdcdc]" />
            <svg viewBox="0 0 13 13" className="pointer-events-none absolute left-0 hidden h-[13px] w-[13px] peer-checked:block"><path d="M3 6.500l2.500 3L10.500 3.500" fill="none" stroke="#222" strokeWidth="1.300" /></svg>
            <span className="pr-px">{name}</span>
          </label>
        ))}
      </div>
      <div className="flex h-[21px] shrink-0 items-stretch border-t border-[#bcc4da] text-[11px] leading-5 [&>*]:border-r [&>*]:border-[#bcc4da]">
        <button type="button" className="w-[53px] pl-[9px] text-left">CPlane</button>
        <span className="w-[88px] text-center">x 65.374</span>
        <span className="w-[88px] text-center">y -2.706</span>
        <span className="w-[88px] text-center">z 0.000</span>
        <span className="w-[88px] text-center">Meters</span>
        <button type="button" className="flex w-[168px] items-center gap-[3px] pl-[3px]"><span className="h-[14px] w-[14px] bg-black" />Default</button>
        {modes.map(([name, on]) => (
          <button key={name} type="button" aria-pressed={on} className={`px-[6px] whitespace-nowrap ${on ? "bg-[#e2f2fd] font-bold" : ""}`}>{name}</button>
        ))}
        <span className="mr-1 flex-1 pl-1">Minutes from last save: 134</span>
      </div>
    </>
  );
}

function TaskBar() {
  return (
    <footer className="flex h-[30px] shrink-0 items-stretch bg-linear-to-r from-[#0d1b20] via-[#161c24] to-[#06171b] text-[12px] text-white">
      <button type="button" aria-label="Start" className="flex w-[43px] items-center justify-center">
        <svg viewBox="0 0 16 16" className="h-[17px] w-[17px]" fill="#fff"><path d="M0 2.300L7 1.300V7.500H0zM8 1.200L16 0v7.500H8zM0 8.500h7v6.200L0 13.700zM8 8.500h8V16l-8-1.200z" /></svg>
      </button>
      <button type="button" aria-label="Task view" className="flex w-[28px] items-center justify-center">
        <svg viewBox="0 0 16 16" className="h-4 w-4" fill="none" stroke="#fff"><path d="M.5 0v2.500h10V0M.5 16v-2.500h10V16M.5 5.500h10v5H.5zM14.500 0v3M14.500 6v10" /><path d="M13.500 4h2v2h-2z" fill="#fff" /></svg>
      </button>
      <button type="button" className="ml-[11px] flex w-[152px] items-center gap-1 border-b-2 border-[#76b9ed] pl-[6px] text-[11px]">
        <svg viewBox="0 0 14 16" className="h-4 w-[14px]"><path d="M0 0h11l2 3v13H0z" fill="#f8d673" /><path d="M9 9h4v7H7z" fill="#e8b93c" /></svg>
        honeybee &amp; ladybug
      </button>
      <button type="button" aria-label="Chrome" className="ml-[5px] flex w-9 items-center justify-center">
        <svg viewBox="0 0 16 16" className="h-4 w-4"><circle cx="8" cy="8" r="7.500" fill="#e2443a" /><path d="M1 5l4 7 2 3.500A7.500 7.500 0 0 1 1 5z" fill="#2fa04e" /><path d="M8 4.500h7a7.500 7.500 0 0 1-8 11l4-6z" fill="#fbcb1b" /><circle cx="8" cy="8" r="3.500" fill="#fff" /><circle cx="8" cy="8" r="2.800" fill="#4586f0" /></svg>
      </button>
      <button type="button" aria-label="Edge" className="flex w-9 items-center justify-center">
        <svg viewBox="0 0 16 16" className="h-[17px] w-[17px]"><path d="M.5 7.200C1.300 2.500 4.500.2 8.200.2c4.600 0 7.300 3.300 7.300 7.700v1.700H5.400c.2 3.800 5.500 4 8.800 1.900v3.300c-5 2.400-12 1-12-5.200 0-3 1.700-5 4-6C3.500 3.600 1.500 5 .5 7.200zm5-.5h5.700c0-3.700-5-3.600-5.700 0z" fill="#1f86e0" /></svg>
      </button>
      <button type="button" className="ml-[6px] flex w-[152px] items-center gap-[5px] border-b-2 border-[#76b9ed] pl-1 text-[11px]">
        <svg viewBox="0 0 16 16" className="h-4 w-4 shrink-0"><circle cx="8" cy="8" r="7.500" fill="#f5851f" /><circle cx="9" cy="7" r="4.500" fill="#3b3a9c" /><path d="M1 6q2 8 8 6 5-1 4-7 4 5-1 9-7 4-11-3z" fill="#ffcb2f" /><path d="M1 5l2-3 2 2 3 1-2 3 2 2-4 1z" fill="#ef4a24" /></svg>
        <span className="whitespace-nowrap">فروم - Mozilla Firefox</span>
      </button>
      <button type="button" className="ml-[5px] flex w-40 items-center gap-1 border-b-2 border-[#76b9ed] bg-[#434b4f] pl-2 text-[11px]">
        <svg viewBox="0 0 16 16" className="h-4 w-4 shrink-0"><rect width="16" height="16" fill="#111" /><path d="M0 1l4 4 3-4 1 6 4 2-4 6-5-3-3-6z" fill="#ddd" /><text x="11" y="8" fontSize="8" fill="#fff" fontFamily="Liberation Sans, sans-serif">6</text></svg>
        <span className="whitespace-nowrap">Untitled - Undefined ...</span>
      </button>
      <div className="ml-auto flex items-center pr-[22px]">
        <button type="button" aria-label="People" className="mr-[14px]"><svg viewBox="0 0 16 16" className="h-4 w-4" fill="none" stroke="#fff" strokeWidth="1.200"><circle cx="5" cy="8" r="2.500" /><path d="M1 15.500q0-5 4-5t4 5" /><circle cx="11" cy="3.500" r="2.500" /><path d="M9 7q6-2 6 4" /></svg></button>
        <button type="button" aria-label="Hidden icons" className="mr-2"><ChevronUp className="h-4 w-4" /></button>
        <button type="button" aria-label="Battery" className="mr-2"><svg viewBox="0 0 18 16" className="h-4 w-[18px]" fill="none" stroke="#fff"><path d="M6 4.500h10v7H5M17 7v2M8 6l5 4M13 6l-5 4M1 3.500h4v3q-2 2-4 0zM2 1v2M4 1v2M3 8v5" /></svg></button>
        <button type="button" aria-label="Wi-Fi" className="mr-2"><svg viewBox="0 0 14 14" className="h-[14px] w-[14px]" fill="none" stroke="#fff"><path d="M7 13q0-5 6-5M4 13Q4 5 13 5" strokeWidth="1.300" /><path d="M1 13Q1 1 13 1" stroke="#888" /><circle cx="11" cy="11.500" r="1.600" fill="#fff" /></svg></button>
        <button type="button" aria-label="Volume" className="mr-[10px]"><svg viewBox="0 0 18 16" className="h-4 w-[18px]" fill="none" stroke="#fff" strokeWidth="1.200"><path d="M1 6h3l4-4v12l-4-4H1zM10 6q2 2 0 4M12 4q4 4 0 8M14 2q6 6 0 12" /></svg></button>
        <button type="button" aria-label="Pen" className="mr-6"><svg viewBox="0 0 18 18" className="h-[17px] w-[17px]" fill="none" stroke="#fff" strokeWidth="1.200"><path d="M6 12l6-10q3-2 3 1L9 14l-4 2zM5 9q-4 0-4 4t5 4q4 0 5-4t6-4" /></svg></button>
        <span className="mr-[22px] text-[11px]">فا</span>
        <time className="mr-5 text-[11px]">2:19 AM</time>
        <button type="button" aria-label="Notifications"><svg viewBox="0 0 16 18" className="h-[18px] w-4"><path d="M0 1h16v12h-5l-3 4-3-4H0z" fill="#fff" /><path d="M3 4.500h10M3 7.500h10M3 10h6" stroke="#111" /></svg></button>
      </div>
    </footer>
  );
}

function LeftTools() {
  return (
    <aside className="w-[66px] shrink-0">
      <svg className="h-full w-full" aria-hidden="true">
        <g transform="translate(0 -157)" fill="none" stroke="#333">
          <path d="M2.500 294v400" stroke="#bcc4da" />
          <path d="M10 213l5-14M17 225q-16 9 0 18M12 253v17M10 252h4v4h-4zM10 268h4v4h-4zM15 281l-6 9 6 9M9 319h4v3H9zM11 318l4-8M15 308h-3v3h3" />
          <path d="M9 341l6-3v15l-6-3zM8 372l7 3v9l-7-2zM9 536h6v6H9zM8 564l7-4v18l-7-3z" fill="#5b7be0" />
          <path d="M7 400l3-3 5 1v9l-6-2z" fill="#f0921c" stroke="#803c00" />
          <path d="M8 428h7v6H8zM15 456q-7 3 0 8M8 481h7M9 508q2-5 6-3M9 547h6v6H9zM8 589h4v4H8zM8 597h4v4H8zM8 604h4v4H8zM9 619l6-2v18l-6-3zM9 650l6-3v12l-6-3z" />
        </g>
      </svg>
    </aside>
  );
}

export default function App() {
  return (
    <div className="relative flex h-screen flex-col overflow-hidden bg-[#ebecf0] font-['Open_Sans','Noto_Sans','DejaVu_Sans',sans-serif] text-black">
      <header className="flex h-[41px] shrink-0 items-start justify-between bg-white pl-[5px] text-[11px]">
        <div>
          <svg viewBox="0 0 16 16" className="mt-1 h-4 w-4"><rect width="16" height="16" fill="#222" /><path d="M1 10l5-7 3 4 4 8-8-2z" fill="#eee" /></svg>
          <span className="ml-[5px] block pt-1 text-[#777]">F</span>
        </div>
        <div className="flex gap-[34px] pt-1 pr-4 text-[#888]">
          <button type="button" aria-label="Minimize Rhino"><svg viewBox="0 0 12 12" className="h-3 w-3"><path d="M1 6.500h10" stroke="currentColor" /></svg></button>
          <button type="button" aria-label="Restore Rhino"><svg viewBox="0 0 12 12" className="h-3 w-3" fill="none" stroke="currentColor"><path d="M1.500 3.500h7v7h-7zM3.500 3.500v-2h7v7h-2" /></svg></button>
          <button type="button" aria-label="Close Rhino"><svg viewBox="0 0 12 12" className="h-3 w-3"><path d="M1 1l10 10M11 1L1 11" stroke="currentColor" /></svg></button>
        </div>
      </header>

      <div className="mt-[5px] flex h-12 shrink-0 text-[11px]">
        <div className="flex w-[11px] justify-center pt-1 pb-1 pl-1"><span className="w-[3px] border-x border-[#bcc4da]" /></div>
        <div className="flex min-w-0 flex-1 flex-col bg-white">
          <p className="h-[28px] leading-[14px] text-[#532]">A<br />F</p>
          <label className="flex h-5 border-t border-[#bcc4da] text-[#532]">
            C
            <input aria-label="Command" className="h-full flex-1 outline-none" />
          </label>
        </div>
        <div className="flex w-[14px] flex-col items-center bg-[#f2f2f2] text-[#444]">
          <ChevronUp className="my-[2px] h-[10px] w-[10px]" strokeWidth={4} />
          <ChevronDown className="my-[2px] h-[10px] w-[10px]" strokeWidth={4} />
          <button type="button" aria-label="Previous" className="flex h-[9px] w-full items-center justify-center border border-[#999]"><svg viewBox="0 0 6 4" className="h-[3px] w-[5px]"><path d="M0 4h6L3 0z" /></svg></button>
          <button type="button" aria-label="Next" className="flex h-[9px] w-full items-center justify-center border border-[#999]"><Caret /></button>
        </div>
      </div>

      <div className="mt-[2px] flex h-[22px] shrink-0 items-end border-t border-b border-[#ccd2e2]">
        <div className="flex pl-[703px] text-[11px]">
          {toolTabs.map((t) => (
            <button key={t} type="button" className="-mr-[6px] h-[17px] bg-[#c3c9dc] px-px pt-px [clip-path:polygon(15px_0,calc(100%-2px)_0,100%_2px,100%_100%,0_100%)]">
              <span className="block h-4 bg-[#d9d9d9] pr-[10px] pl-4 leading-4 whitespace-nowrap [clip-path:polygon(15px_0,calc(100%-2px)_0,100%_2px,100%_100%,0_100%)]">{t}</span>
            </button>
          ))}
        </div>
        <span className="ml-auto self-center"><Gear className="h-[14px] w-[14px]" /></span>
      </div>
      <div className="flex h-[38px] shrink-0 items-center pb-2 pl-[728px]">
        {viewTools.map(([name, art], i) =>
          name === "|" ? (
            <span key={i} className="mx-[2px] h-6 w-px bg-[#bbb]" />
          ) : (
            <button key={name} type="button" aria-label={name} className="flex w-7 justify-center">
              <svg viewBox="0 0 24 24" className="h-6 w-6">{art}</svg>
            </button>
          ),
        )}
      </div>

      <div className="flex min-h-0 flex-1">
        <LeftTools />
        <main className="flex min-w-0 flex-1 flex-col">
          <div className="grid flex-1 grid-cols-2 grid-rows-2 gap-[3px] bg-[#e4e6ee]">
            <div className="border border-[#bcc4da] bg-[#9da3aa]" />
            <section className="relative overflow-hidden border border-[#bcc4da] bg-[#9da3aa]">
              <PerspectiveScene />
              <button type="button" className="relative flex h-[18px] items-center gap-[5px] rounded-br bg-[#8ba4c1] pr-[2px] pl-[3px] text-[12px] font-bold">
                Perspective
                <span className="flex h-[15px] items-center border-l border-black pl-[2px]"><svg viewBox="0 0 8 5" className="h-[5px] w-2"><path d="M0 0h8L4 4.500z" /></svg></span>
              </button>
            </section>
            <div className="border border-[#bcc4da] bg-[#9da3aa]" />
            <section className="relative overflow-hidden border border-[#bcc4da] bg-[#9da3aa]">
              <RightScene />
              <button type="button" aria-label="Viewport menu" className="relative flex h-[18px] w-[57px] items-center justify-end rounded-br bg-[#c8cbd0] pr-1">
                <svg viewBox="0 0 11 14" className="h-[14px] w-[11px]"><path d="M.5 0v14" stroke="#444" /><path d="M2 5h8L6 9z" fill="#333" /></svg>
              </button>
            </section>
          </div>
          <div className="flex h-[27px] shrink-0 items-start pl-[2px] text-[11px]" role="tablist">
            {["Perspective", "Top", "Front", "Right"].map((t, i) => (
              <button key={t} type="button" role="tab" aria-selected={i === 0} className={`h-5 border-r border-b border-[#bcc4da] pt-[3px] pr-[6px] pl-[9px] leading-4 [clip-path:polygon(0_0,100%_0,100%_100%,6px_100%,0_70%)] ${i === 0 ? "bg-[#f4f4f8]" : "bg-[#d9d9d9]"}`}>{t}</button>
            ))}
            <button type="button" aria-label="Add viewport" className="flex h-5 w-[26px] items-center justify-center border-r border-b border-[#bcc4da] pt-[3px]">
              <svg viewBox="0 0 10 10" className="h-[10px] w-[10px]"><path d="M3.500.5h3v3h3v3h-3v3h-3v-3h-3v-3h3z" fill="#fff" stroke="#777" /></svg>
            </button>
          </div>
        </main>
        <SidePanel />
      </div>
      <StatusBars />
      <TaskBar />

      <Grasshopper />
      <Tooltip />
    </div>
  );
}
